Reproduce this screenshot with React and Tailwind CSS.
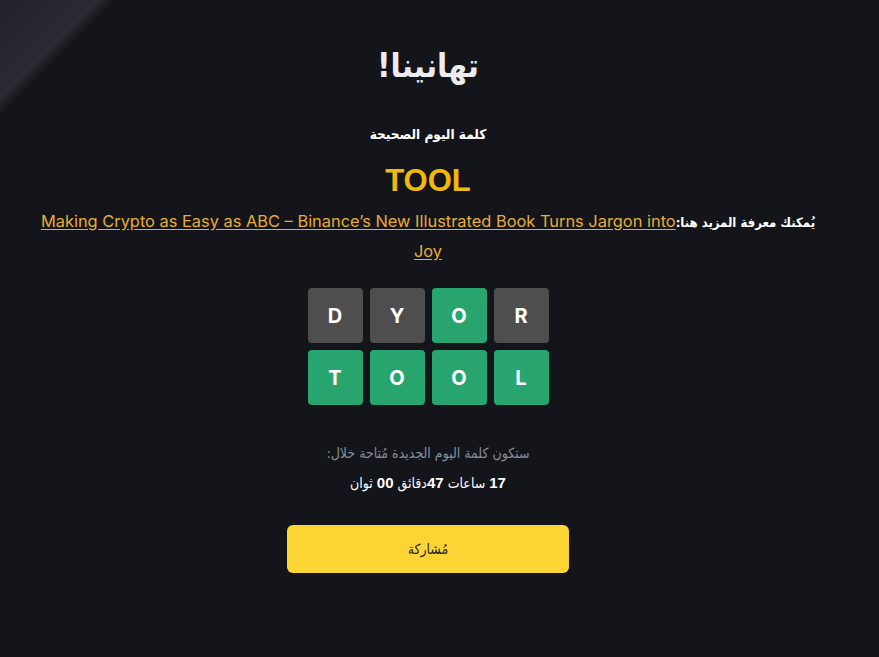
export default function App() {
  const rows = [
    [
      { l: "D", c: "bg-[#4e4e4e]" },
      { l: "Y", c: "bg-[#4e4e4e]" },
      { l: "O", c: "bg-[#28a46f]" },
      { l: "R", c: "bg-[#4e4e4e]" },
    ],
    [
      { l: "T", c: "bg-[#28a46f]" },
      { l: "O", c: "bg-[#28a46f]" },
      { l: "O", c: "bg-[#28a46f]" },
      { l: "L", c: "bg-[#28a46f]" },
    ],
  ];

  return (
    <div className="relative min-h-screen h-[657px] overflow-hidden bg-[#14151a] font-['DejaVu_Sans_Condensed','DejaVu_Sans',sans-serif]">
      {/* corner glow */}
      <div className="absolute top-0 left-0 w-[214px] h-[214px] bg-[linear-gradient(135deg,#212229_0%,#2a2b33_23%,#14151a_27%)]" />

      <div dir="rtl" className="relative mr-[23px] flex flex-col items-center pt-[44px] text-center">
        <h1 className="text-[33px] font-bold leading-[44px] text-[#eaecef]">تهانينا!</h1>

        <p className="mt-[36px] text-[13.5px] font-bold leading-[20px] text-white">كلمة اليوم الصحيحة</p>

        <div className="mt-[17px] font-['Liberation_Sans',sans-serif] text-[31px] font-bold leading-[40px] text-[#f0b90b]">TOOL</div>

        <p className="mt-[6px] px-[28px] text-[16px] leading-[28px] text-white">
          <span className="font-bold text-[13px] leading-[28px]">يُمكنك معرفة المزيد هنا:</span>
          <a
            href="#"
            className="font-['Inter',sans-serif] text-[16.4px] leading-[28px] text-[#e6ad3b] underline underline-offset-2"
          >
            Making Crypto as Easy as ABC – Binance’s New Illustrated Book Turns Jargon into Joy
          </a>
        </p>

        <div dir="ltr" className="mt-[22px] flex flex-col gap-[7px]">
          {rows.map((row, i) => (
            <div key={i} className="flex gap-[7px]">
              {row.map((t, j) => (
                <div
                  key={j}
                  className={`flex h-[55px] w-[55px] items-center justify-center rounded-[4px] ${t.c} font-['Inter',sans-serif] text-[20px] font-bold text-white`}
                >
                  {t.l}
                </div>
              ))}
            </div>
          ))}
        </div>

        <p className="mt-[38px] text-[14px] leading-[20px] text-[#848e9c]">ستكون كلمة اليوم الجديدة مُتاحة خلال:</p>
        <p className="mt-[10px] text-[14px] leading-[20px] text-white">
          <span className="font-['Liberation_Sans',sans-serif] font-bold text-[15px]">17</span> ساعات <span className="font-['Liberation_Sans',sans-serif] font-bold text-[15px]">47</span>دقائق <span className="font-['Liberation_Sans',sans-serif] font-bold text-[15px]">00</span> ثوان
        </p>

        <button className="mt-[32px] h-[48px] w-[282px] rounded-[6px] bg-[#fcd535] text-[14px] text-[#1e2329]">
          مُشاركة
        </button>
      </div>
    </div>
  );
}
